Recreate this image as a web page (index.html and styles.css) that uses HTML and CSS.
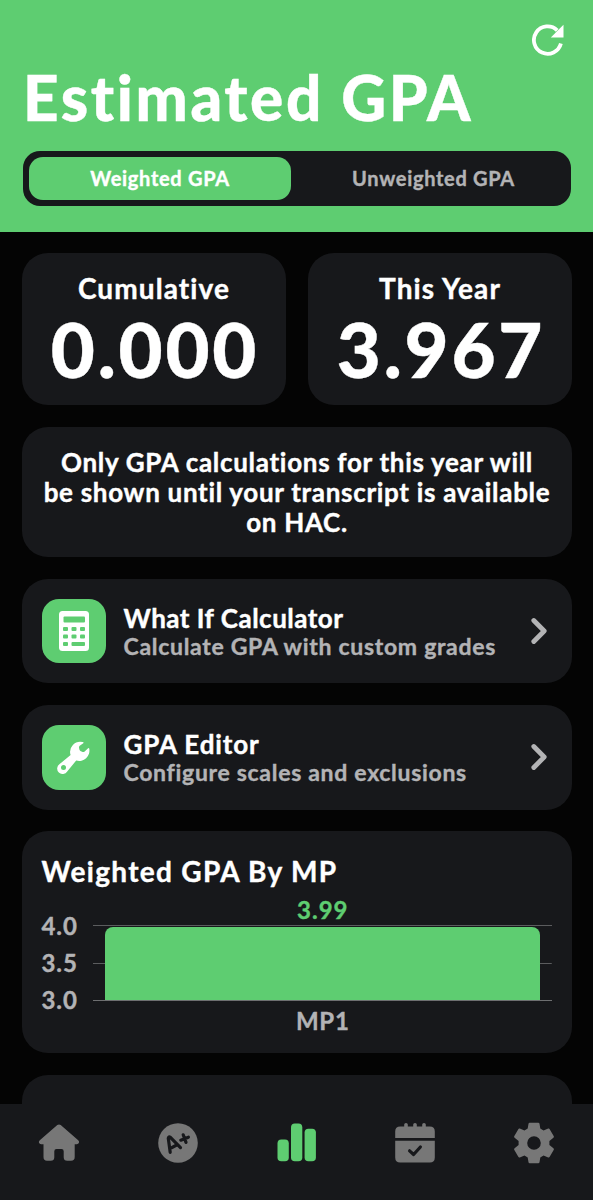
FILE: index.html
```html
<!DOCTYPE html>
<html lang="en">
<head>
    <meta charset="UTF-8">
    <meta name="viewport" content="width=device-width, initial-scale=1.0">
    <title>Estimated GPA</title>
    <link rel="stylesheet" href="styles.css">
</head>
<body>
    <header>
        <svg class="refresh" viewBox="0 0 32 32">
            <path d="M28.9 19.5A13.7 13.7 0 1 1 25.2 6.3" fill="none" stroke="#fff" stroke-width="3.8"/>
            <path d="M31.5 .8V13.6H18.8Z" fill="#fff"/>
        </svg>
        <h1>Estimated GPA</h1>
        <div class="toggle">
            <div class="option active">Weighted GPA</div>
            <div class="option">Unweighted GPA</div>
        </div>
    </header>
    <main>
        <div class="stats">
            <section class="card stat">
                <h2>Cumulative</h2>
                <p class="number">0.000</p>
            </section>
            <section class="card stat">
                <h2>This Year</h2>
                <p class="number">3.967</p>
            </section>
        </div>
        <section class="card message">
            <p>Only GPA calculations for this year will<br>be shown until your transcript is available<br>on HAC.</p>
        </section>
        <section class="card link">
            <div class="tile">
                <svg width="32" height="42" viewBox="0 0 32 42">
                    <rect x="1" y="1" width="30" height="40" rx="3.5" fill="#fff"/>
                    <g fill="#5ecd71">
                        <rect x="5.5" y="6.5" width="21.5" height="6" rx="1"/>
                        <rect x="5" y="17" width="5" height="4" rx="1"/>
                        <rect x="13.5" y="17" width="5" height="4" rx="1"/>
                        <rect x="22" y="17" width="5" height="4" rx="1"/>
                        <rect x="5" y="24.5" width="5" height="4" rx="1"/>
                        <rect x="13.5" y="24.5" width="5" height="4" rx="1"/>
                        <rect x="22" y="24.5" width="5" height="4" rx="1"/>
                        <rect x="5" y="32" width="5" height="4" rx="1"/>
                        <rect x="13.5" y="32" width="13.5" height="4" rx="1"/>
                    </g>
                </svg>
            </div>
            <div class="text">
                <h3>What If Calculator</h3>
                <p>Calculate GPA with custom grades</p>
            </div>
            <svg class="chevron" viewBox="0 0 16 28">
                <path d="M2.8 3.5 13.2 14 2.8 24.5"/>
            </svg>
        </section>
        <section class="card link">
            <div class="tile">
                <svg width="34" height="34" viewBox="0 0 34 34">
                    <path d="M25.8 2.1A10.2 10.2 0 0 0 13.6 15.1L2.6 24.1A5.4 5.4 0 1 0 10.2 31.4L19.2 20.5A10.2 10.2 0 0 0 32.2 8.6Q31.9 7.6 31.1 8.3L27.4 11.7Q26.6 12.3 25.6 12L23.4 11Q22.6 10.6 22.4 9.6L22 7.4Q22 6.4 22.7 5.8L26.3 3.3Q27 2.5 25.8 2.1Z" fill="#fff"/>
                    <circle cx="6.5" cy="27.5" r="2.5" fill="#5ecd71"/>
                </svg>
            </div>
            <div class="text">
                <h3 class="editor">GPA Editor</h3>
                <p>Configure scales and exclusions</p>
            </div>
            <svg class="chevron" viewBox="0 0 16 28">
                <path d="M2.8 3.5 13.2 14 2.8 24.5"/>
            </svg>
        </section>
        <section class="card chart">
            <h2>Weighted GPA By MP</h2>
            <div class="graph">
                <div class="axis">
                    <span>4.0</span>
                    <span>3.5</span>
                    <span>3.0</span>
                </div>
                <div class="series">
                    <p class="value">3.99</p>
                    <div class="plot">
                        <div class="bar" style="height: 99%;"></div>
                    </div>
                    <p class="label">MP1</p>
                </div>
            </div>
        </section>
        <section class="card chart">
            <h2>Weighted GPA</h2>
        </section>
    </main>
    <nav>
        <svg viewBox="0 0 42 42">
            <path d="M19.3 3.1Q21 1.7 22.7 3.1L40.2 18.3C42 20 40.8 22.2 38.8 22.2H36.7V35Q36.7 38.8 33 38.8H29.3Q25.7 38.8 25.7 35.3V29.2Q25.7 27 23.5 27H18.5Q16.3 27 16.3 29.2V35.3Q16.3 38.8 12.7 38.8H9Q5.5 38.8 5.5 35V22.2H3.2C1.2 22.2 0 20 1.8 18.3Z"/>
        </svg>
        <svg viewBox="0 0 42 42">
            <circle cx="21" cy="21" r="19.8"/>
            <path class="cut" d="M13.2 30.3 11.3 16.3Q11.6 14.2 13.4 15.4L23.5 25.6M13 26.6 19.6 23M23.8 18.2 31.4 15.2M26.2 12.8 29 20.4"/>
        </svg>
        <svg class="selected" viewBox="0 0 42 42">
            <rect x="2.5" y="17.6" width="11.3" height="21.6" rx="3.8"/>
            <rect x="16" y="1.6" width="11.3" height="37.6" rx="3.8"/>
            <rect x="29.6" y="6.7" width="11.3" height="32.5" rx="3.8"/>
        </svg>
        <svg viewBox="0 0 42 42">
            <path d="M1.2 16V9.5Q1.2 4.5 6.2 4.5H10.2V2.5Q10.2 .9 12 .9T13.8 2.5V4.5H19.2V2.5Q19.2 .9 21 .9T22.8 2.5V4.5H28.2V2.5Q28.2 .9 30 .9T31.8 2.5V4.5H35.8Q40.8 4.5 40.8 9.5V16ZM1.2 18.8H40.8V35.5Q40.8 40.5 35.8 40.5H6.2Q1.2 40.5 1.2 35.5Z"/>
            <path class="cut" d="M15.6 28.8 19.6 32.5 26.4 25"/>
        </svg>
        <svg viewBox="0 0 42 42">
            <path fill-rule="evenodd" d="M16.7.7H25.3Q26.3.7 26.5 1.7L27.3 6.5 30.5 8.4 35.2 6.6Q36.2 6.3 36.7 7.2L40.8 14.2Q41.2 15.1 40.4 15.8L36.4 19.1V22.9L40.4 26.2Q41.2 26.9 40.8 27.8L36.7 34.8Q36.2 35.7 35.2 35.4L30.5 33.6 27.3 35.5 26.5 40.3Q26.3 41.3 25.3 41.3H16.7Q15.7 41.3 15.5 40.3L14.7 35.5 11.5 33.6 6.8 35.4Q5.8 35.7 5.3 34.8L1.2 27.8Q.8 26.9 1.6 26.2L5.6 22.9V19.1L1.6 15.8Q.8 15.1 1.2 14.2L5.3 7.2Q5.8 6.3 6.8 6.6L11.5 8.4 14.7 6.5 15.5 1.7Q15.7.7 16.7.7ZM21 14.2A6.8 6.8 0 1 0 21 27.8 6.8 6.8 0 1 0 21 14.2Z"/>
        </svg>
    </nav>
</body>
</html>
```
FILE: styles.css
```css
* {
    margin: 0;
    padding: 0;
    box-sizing: border-box;
}

body {
    height: 1200px;
    display: flex;
    flex-direction: column;
    overflow: hidden;
    background-color: #040404;
    color: #ffffff;
    font-family: Lato, "Open Sans", sans-serif;
    font-weight: 700;
    letter-spacing: 0.7px;
    white-space: nowrap;
    -webkit-text-stroke: 0.4px;
}

svg {
    display: block;
    flex-shrink: 0;
}

header {
    height: 232px;
    flex-shrink: 0;
    display: flex;
    flex-direction: column;
    padding: 24px 22px 0;
    background-color: #5ecd71;
}

.refresh {
    width: 32px;
    height: 32px;
    margin-right: 7px;
    align-self: flex-end;
}

h1 {
    height: 74px;
    margin: 4px 0 17px 1px;
    font-size: 62px;
    line-height: 74px;
    font-weight: 900;
    letter-spacing: 2.6px;
}

.toggle {
    height: 55px;
    display: flex;
    padding: 6px;
    margin: 0 0 0 1px;
    border-radius: 17px;
    background-color: #17181b;
}

.option {
    flex: 1;
    display: flex;
    justify-content: center;
    padding-left: 11px;
    font-size: 20px;
    line-height: 42px;
    color: #b3b3b5;
}

.option.active {
    flex: 0 0 262px;
    padding-left: 0;
    border-radius: 14px;
    color: #ffffff;
    background-color: #5ecd71;
}

main {
    flex: 1;
    min-height: 0;
    overflow: hidden;
    display: flex;
    flex-direction: column;
    gap: 21.7px;
    padding: 21.3px 21.5px 0;
}

.card {
    flex-shrink: 0;
    border-radius: 26px;
    background-color: #17181b;
}

.stats {
    display: flex;
    gap: 22px;
}

.stat {
    flex: 1;
    height: 152px;
    padding-top: 17px;
    text-align: center;
}

h2 {
    font-size: 28px;
    line-height: 36px;
    letter-spacing: 1.1px;
    text-indent: 1px;
}

.number {
    font-size: 76px;
    line-height: 86px;
    font-weight: 900;
    letter-spacing: 2.8px;
    text-indent: 3px;
}

.message {
    height: 130px;
    padding: 20px 0 0 1px;
    font-size: 26px;
    line-height: 30px;
    text-align: center;
}

.link {
    height: 104.6px;
    display: flex;
    align-items: center;
    padding: 0 25px 0 20px;
}

.tile {
    width: 64.5px;
    height: 64.5px;
    display: flex;
    justify-content: center;
    align-items: center;
    margin-right: 17.5px;
    border-radius: 17px;
    background-color: #5ecd71;
}

.text {
    flex: 1;
    padding-top: 2px;
}

h3 {
    font-size: 26px;
    line-height: 28px;
    letter-spacing: 0.5px;
}

.editor {
    letter-spacing: 0.9px;
}

.text p {
    font-size: 23px;
    line-height: 28px;
    color: #b3b3b5;
}

.chevron {
    width: 16px;
    height: 28px;
    fill: none;
    stroke: #b3b3b5;
    stroke-width: 4.8;
    stroke-linecap: round;
    stroke-linejoin: round;
}

.chart {
    height: 221.7px;
    padding: 22px 20px 0;
}

.chart h2 {
    letter-spacing: 1.3px;
    text-indent: 0;
}

.graph {
    display: flex;
    margin-top: 6px;
    font-size: 24px;
    color: #b3b3b5;
}

.axis {
    width: 51.5px;
    display: flex;
    flex-direction: column;
    padding-top: 11.5px;
    line-height: 37.3px;
    letter-spacing: 0.9px;
}

.series {
    flex: 1;
    text-align: center;
    text-indent: 1px;
}

.value {
    height: 30px;
    line-height: 30px;
    color: #5ecd71;
    letter-spacing: 1px;
}

.plot {
    height: 76px;
    display: flex;
    align-items: flex-end;
    padding: 0 11.5px 0 12px;
    border-top: 1px solid #5b5c5e;
    border-bottom: 1px solid #6e6f71;
    background: linear-gradient(#5b5c5e, #5b5c5e) center / 100% 1px no-repeat;
}

.bar {
    flex: 1;
    border-radius: 8px 8px 0 0;
    background-color: #5ecd71;
}

.label {
    margin-top: 5px;
    line-height: 30px;
}

nav {
    height: 96px;
    flex-shrink: 0;
    display: flex;
    justify-content: space-around;
    padding-top: 18px;
    background-color: #17181b;
}

nav svg {
    width: 42px;
    height: 42px;
    fill: #777777;
}

nav .selected {
    fill: #5ecd71;
}

.cut {
    fill: none;
    stroke: #17181b;
    stroke-width: 3.2;
    stroke-linecap: round;
    stroke-linejoin: round;
}
```
